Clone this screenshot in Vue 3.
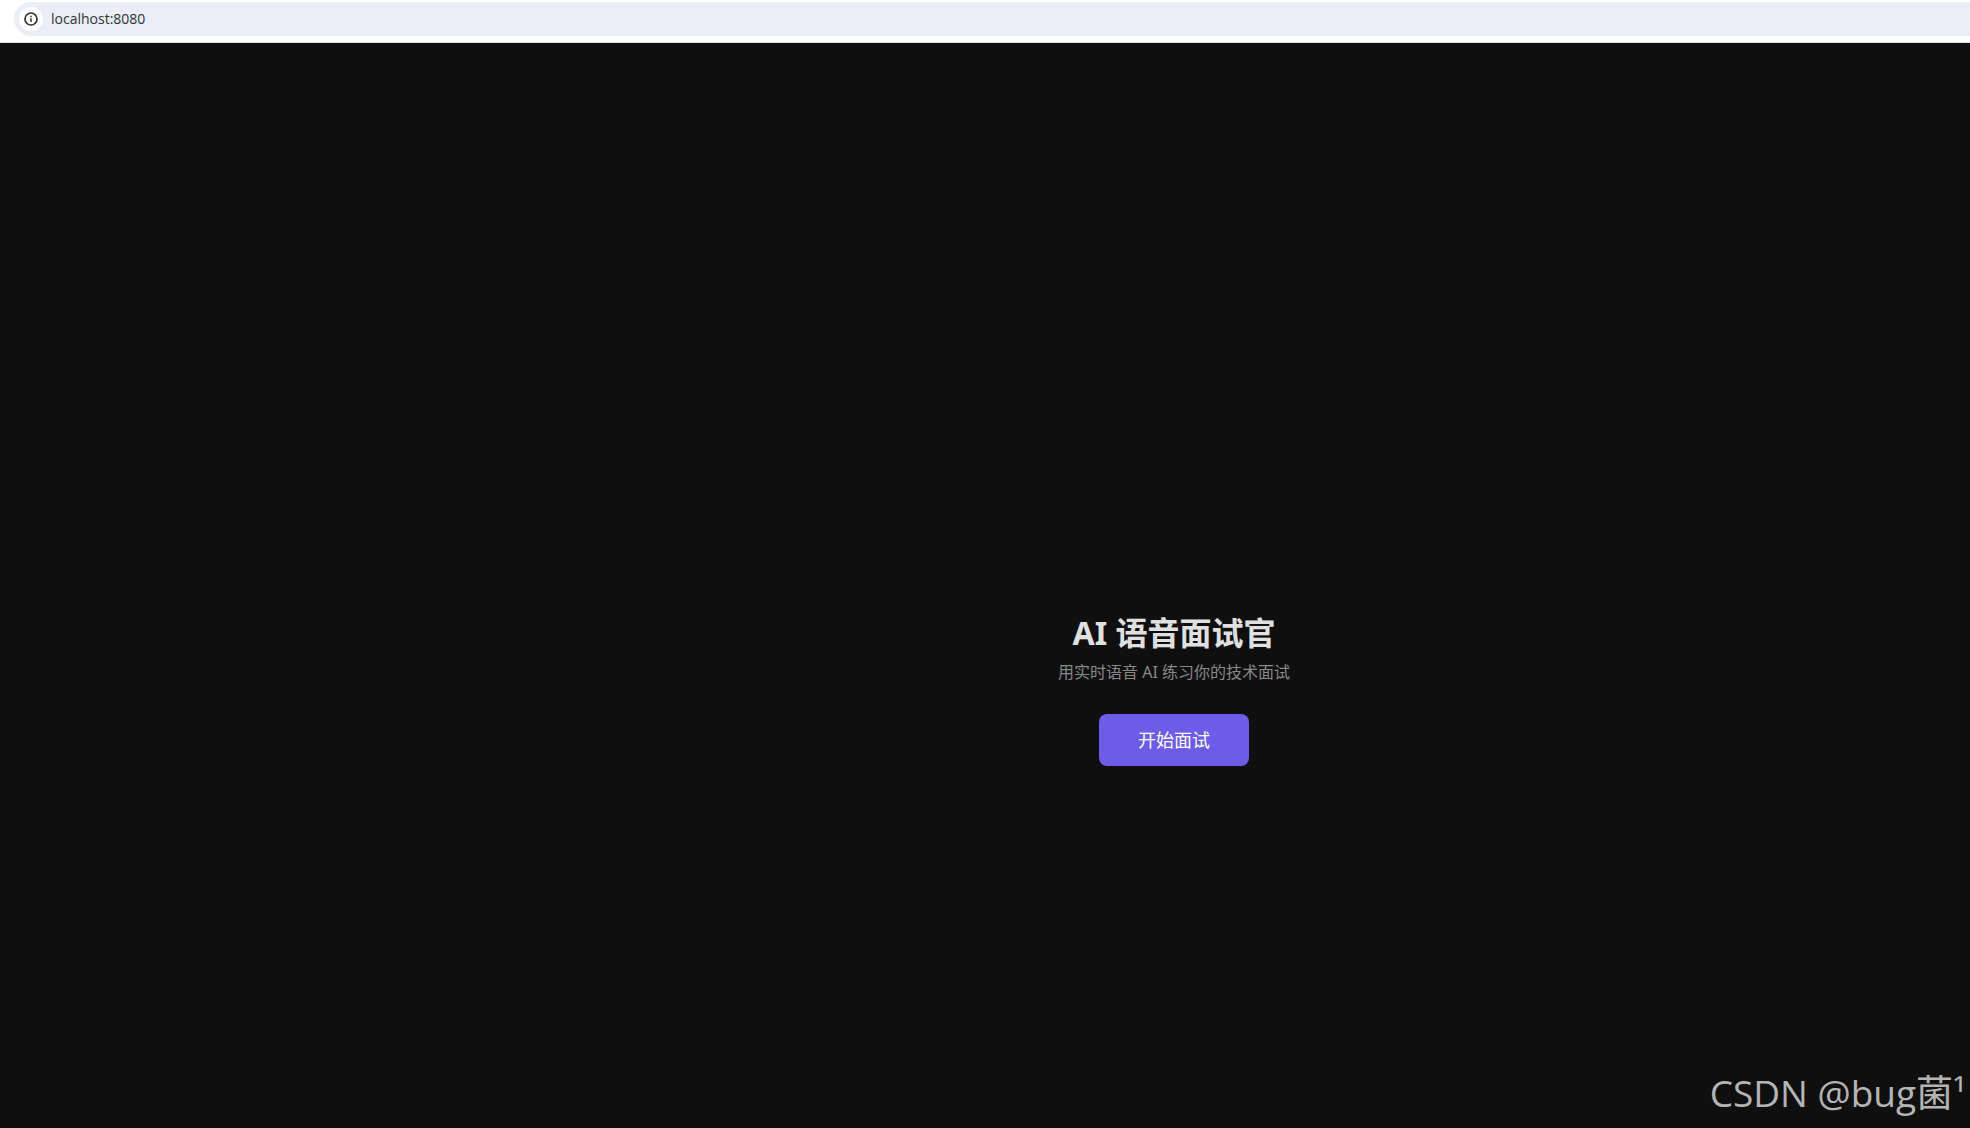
<script setup>
const address = 'localhost:8080'

function startInterview() {}
</script>

<template>
  <div class="window">
    <header class="toolbar">
      <form class="address-bar" @submit.prevent>
        <button class="site-info" type="button" aria-label="查看网站信息">
          <svg viewBox="0 0 16 16" width="16" height="16" aria-hidden="true">
            <circle cx="8" cy="8" r="6" fill="none" stroke="#303134" stroke-width="1.7" />
            <path d="M8 7.2v3.8M8 4.8v1.5" stroke="#303134" stroke-width="1.5" />
          </svg>
        </button>
        <input class="url" type="text" aria-label="地址" :value="address" spellcheck="false" />
      </form>
    </header>
    <main class="page">
      <section class="welcome">
        <h1>AI 语音面试官</h1>
        <p>用实时语音 AI 练习你的技术面试</p>
        <button class="start" type="button" @click="startInterview">开始面试</button>
      </section>
    </main>
    <div class="watermark">CSDN @bug菌¹</div>
  </div>
</template>

<style>
body {
  margin: 0;
  background: #0f0f0f;
}
</style>

<style scoped>
.window {
  position: relative;
  display: flex;
  flex-direction: column;
  min-height: 100vh;
  overflow: hidden;
  background: #0f0f0f;
  font-family: "Noto Sans", "Noto Sans CJK SC", sans-serif;
}

.toolbar {
  padding: 2px 0 6px 14px;
  background: #fff;
  border-bottom: 1px solid #dce4e2;
}

.address-bar {
  display: flex;
  align-items: center;
  gap: 8px;
  height: 34px;
  padding-left: 5px;
  border-radius: 17px 0 0 17px;
  background: #ebeef7;
}

.site-info {
  display: flex;
  align-items: center;
  justify-content: center;
  width: 24px;
  height: 24px;
  padding: 0;
  border: 0;
  border-radius: 50%;
  background: #fff;
}

.url {
  flex: 1;
  height: 24px;
  padding: 0;
  border: 0;
  outline: 0;
  background: transparent;
  color: #303236;
  font: 14px/24px "Open Sans", sans-serif;
}

.page {
  display: flex;
  flex: 1;
  align-items: center;
  justify-content: center;
  padding-left: 378px;
}

.welcome {
  display: flex;
  flex-direction: column;
  align-items: center;
  padding-top: 206px;
  text-align: center;
}

h1 {
  margin: 0 0 7px;
  color: #e0e0e0;
  font-size: 32px;
  line-height: 44px;
}

p {
  margin: 0 0 32px;
  color: #888;
  font-size: 16px;
  line-height: 20px;
}

.start {
  height: 52px;
  padding: 0 39px;
  border: 0;
  border-radius: 8px;
  background: #6c5ce7;
  color: #fff;
  font: 18px/24px "Noto Sans", "Noto Sans CJK SC", sans-serif;
  cursor: pointer;
}

.watermark {
  position: absolute;
  right: 4px;
  bottom: 8px;
  color: #b4b4b4;
  font: 37px/54px "Open Sans", "Noto Sans CJK SC", sans-serif;
  white-space: nowrap;
  pointer-events: none;
}
</style>
